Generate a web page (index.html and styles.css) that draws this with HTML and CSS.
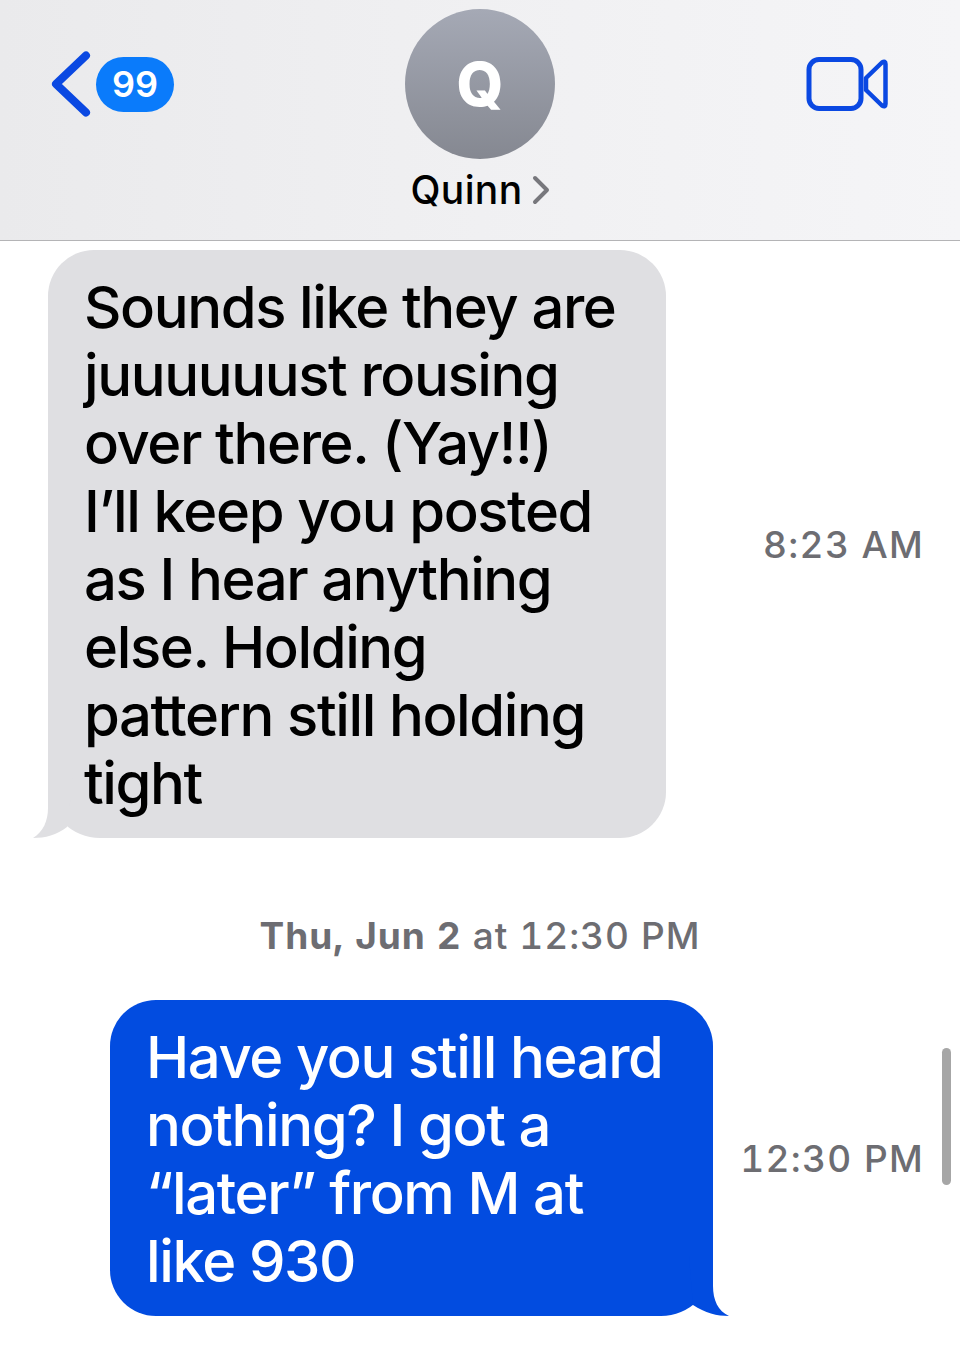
FILE: index.html
```html
<!DOCTYPE html>
<html lang="en">
<head>
<meta charset="utf-8">
<title>Quinn</title>
<link rel="stylesheet" href="styles.css">
</head>
<body>
<div class="screen">
  <header class="nav">
    <div class="back">
      <svg class="chevron" width="40" height="66" viewBox="0 0 40 66"><path d="M35.500 4.500 L5.500 33 L35.500 61.500" fill="none" stroke="#0a48e2" stroke-width="8" stroke-linecap="round" stroke-linejoin="round"/></svg>
      <span class="badge">99</span>
    </div>
    <div class="contact">
      <div class="avatar">Q</div>
      <div class="name">Quinn<svg class="disclosure" width="18" height="30" viewBox="0 0 18 30"><path d="M3 3 L15 15 L3 27" fill="none" stroke="#77777c" stroke-width="4" stroke-linecap="round" stroke-linejoin="round"/></svg></div>
    </div>
    <svg class="video" width="84" height="56" viewBox="0 0 84 56"><rect x="3" y="3.500" width="52" height="49" rx="10" fill="none" stroke="#0a48e2" stroke-width="5"/><path d="M60 22 L76 6.500 Q79.500 4.500 79.500 8 L79.500 48 Q79.500 51.500 76 49.500 L60 34 Z" fill="none" stroke="#0a48e2" stroke-width="4.500" stroke-linejoin="round"/></svg>
  </header>
  <main class="thread">
    <div class="row row-first">
      <div class="bubble incoming">Sounds like they are<br>juuuuuust rousing<br>over there. (Yay!!)<br>I’ll keep you posted<br>as I hear anything<br>else. Holding<br>pattern still holding<br>tight
        <svg class="tail tail-in" width="40" height="60" viewBox="0 0 40 60"><path d="M15 0 L15 30 C15 43 10 54 0 60 C12 60 24 57 34 49 L40 0 Z" fill="#dfdfe2"/></svg>
      </div>
      <time class="stamp stamp-in">8:23 AM</time>
    </div>
    <div class="date"><b>Thu, Jun 2</b> at 12:30 PM</div>
    <div class="row row-out">
      <div class="bubble outgoing">Have you still heard<br>nothing? I got a<br>“later” from M at<br>like 930
        <svg class="tail tail-out" width="40" height="60" viewBox="0 0 40 60"><path d="M24 0 L24 30 C24 44 29 55 40 60 C28 60 16 57 4 49 L0 0 Z" fill="#024ce0"/></svg>
      </div>
      <time class="stamp stamp-out">12:30 PM</time>
    </div>
  </main>
  <div class="scrollbar"></div>
</div>
</body>
</html>
```
FILE: styles.css
```css
* { box-sizing: border-box; }
html, body { margin: 0; padding: 0; background: #fff; }
.screen {
  position: relative;
  width: 960px;
  height: 1362px;
  overflow: hidden;
  font-family: Inter, "Liberation Sans", sans-serif;
}
.nav {
  height: 241px;
  border-bottom: 1px solid #b4b4b6;
  background: linear-gradient(90deg, #eaeaec 0%, #f0f0f2 50%, #f5f5f7 100%);
  display: grid;
  grid-template-columns: 1fr auto 1fr;
  padding: 9px 50px 0 50px;
}
.back { display: flex; align-items: center; height: 150px; gap: 5px; }
.chevron { display: block; width: 41px; flex: none; }
.badge {
  width: 78px;
  height: 55px;
  border-radius: 28px;
  background: #0a7bfb;
  color: #fff;
  font-size: 36px;
  font-weight: 600;
  display: flex;
  align-items: center;
  justify-content: center;
}
.contact { display: flex; flex-direction: column; align-items: center; }
.avatar {
  width: 150px;
  height: 150px;
  border-radius: 50%;
  background: linear-gradient(180deg, #a5a9b5 0%, #858891 100%);
  color: #fff;
  font-size: 60px;
  font-weight: 800;
  display: flex;
  align-items: center;
  justify-content: center;
}
.name {
  margin-top: 8px;
  font-size: 39px;
  line-height: 46px;
  font-weight: 500;
  color: #000;
  letter-spacing: 0.4px;
  display: flex;
  align-items: center;
  gap: 9px;
}
.disclosure { display: block; }
.video { justify-self: end; margin: 47px 20px 0 0; }
.thread { display: flex; flex-direction: column; }
.row { display: flex; align-items: center; justify-content: space-between; padding-right: 36px; }
.row-first { padding-left: 48px; margin-top: 9px; }
.row-out { padding-left: 110px; }
.bubble {
  position: relative;
  font-size: 58px;
  font-weight: 500;
  line-height: 68px;
  letter-spacing: -1.4px;
  white-space: nowrap;
  padding: 23px 0 21px 36px;
  border-radius: 46px;
}
.incoming { width: 618px; height: 588px; background: #dfdfe2; color: #000; border-bottom-left-radius: 52px; }
.outgoing { width: 603px; height: 316px; background: #024ce0; color: #fff; border-bottom-right-radius: 52px; }
.tail { position: absolute; bottom: 0; display: block; }
.tail-in { left: -15px; }
.tail-out { right: -16px; }
.stamp { font-size: 37px; font-weight: 500; color: #6d6d72; letter-spacing: 1.3px; font-variant-numeric: tabular-nums; }
.date {
  margin-top: 75px;
  height: 45px;
  margin-bottom: 42px;
  line-height: 45px;
  text-align: center;
  font-size: 37px;
  font-weight: 500;
  color: #6d6d72;
  letter-spacing: 1px;
  font-variant-numeric: tabular-nums;
}
.date b { font-weight: 700; }
.scrollbar {
  position: absolute;
  left: 942px;
  top: 1048px;
  width: 9px;
  height: 137px;
  border-radius: 5px;
  background: #a6a6a6;
}
```
